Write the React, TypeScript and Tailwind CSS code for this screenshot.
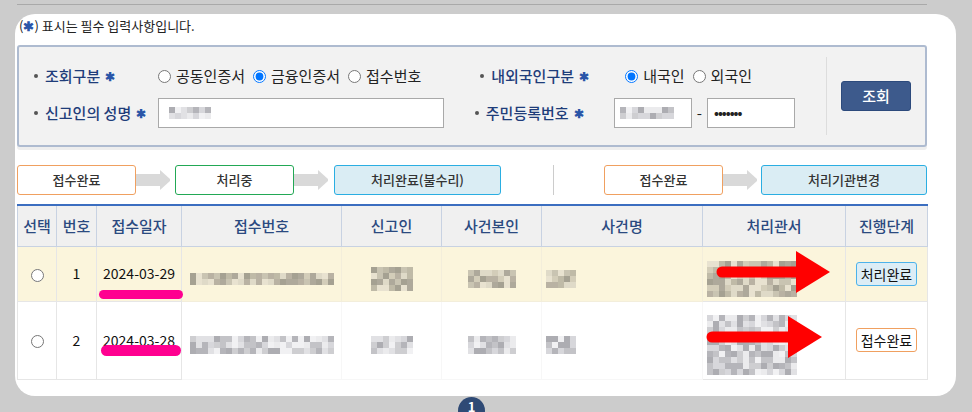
import React from "react";

const FONT = { fontFamily: '"Noto Sans CJK KR", "Noto Sans", sans-serif' };

// blurred (mosaic) placeholder for masked personal data
function Mosaic({ cols, rows, seed, warm }: { cols: number; rows: number; seed: number; warm?: boolean }) {
	const warmTones = ["#b9b4a2", "#a6a194", "#cfc9b6", "#9c988a", "#c4bfae", "#ddd8c6", "#b2ab9d", "#e6e1cf"];
	const coolTones = ["#c9c9cd", "#aeaeb3", "#dedee2", "#bdbdc2", "#e9e9ec", "#a5a5aa", "#d3d3d8", "#f0f0f2"];
	const tones = warm ? warmTones : coolTones;
	let s = seed;
	const next = () => {
		s = (s * 9301 + 49297) % 233280;
		return s / 233280;
	};
	const cells = [];
	for (let i = 0; i < cols * rows; i++) {
		cells.push(
			<span
				key={i}
				className="block h-[6px] w-[6px]"
				style={{ backgroundColor: tones[Math.floor(next() * tones.length)] }}
			/>
		);
	}
	return (
		<div className="inline-flex flex-wrap opacity-90" style={{ width: cols * 6 }}>
			{cells}
		</div>
	);
}

function StepArrow() {
	return (
		<svg width="34" height="30" viewBox="0 0 34 30" className="shrink-0">
			<rect x="0" y="9" width="25" height="12" fill="#d9d9d9" />
			<polygon points="24,5 35,15 24,25" fill="#d9d9d9" />
		</svg>
	);
}

function Step({ label, className }: { label: string; className: string }) {
	return (
		<div
			className={`flex h-[30px] items-center justify-center rounded-[3px] border text-[13px] font-medium text-[#333] ${className}`}
		>
			{label}
		</div>
	);
}

function RedArrow({ shaftStart, tipX }: { shaftStart: number; tipX: number }) {
	const headX = tipX - 34;
	return (
		<svg width="140" height="46" viewBox="0 0 140 46">
			<line x1={shaftStart} y1="23" x2={headX + 4} y2="23" stroke="#ff0000" strokeWidth="11" strokeLinecap="round" />
			<polygon points={`${headX},2 ${tipX},23 ${headX},44`} fill="#ff0000" />
		</svg>
	);
}

function Label({ text, width }: { text: string; width: string }) {
	return (
		<div className={`flex items-center text-[#1f3d7a] ${width}`}>
			<span className="mr-[7px] h-[4px] w-[4px] rounded-full bg-[#555]" />
			<span className="font-medium">{text}</span>
			<span className="ml-[5px] text-[12px] font-bold text-[#2a55a8]">✱</span>
		</div>
	);
}

export default function App() {
	return (
		<div className="h-[412px] w-[972px] overflow-hidden bg-[#cccccc] pt-[4px]" style={FONT}>
			<div className="ml-[17px] h-px w-[910px] bg-[#a9a9a9]" />

			<div className="ml-[15px] mt-[9px] h-[382px] w-[941px] rounded-[20px] bg-white px-[2px] pt-[3px]">
				<p className="ml-[2px] text-[13px] leading-[18px] text-[#222]">
					(<span className="font-bold text-[#2a55a8]">✱</span>) 표시는 필수 입력사항입니다.
				</p>

				{/* search box */}
				<div className="mt-[10px] flex h-[102px] w-[910px] rounded-[3px] border-2 border-[#aebbd0] bg-[#f2f2f2] shadow-[0_3px_0_#eeeeee]">
					<div className="flex flex-1 flex-col gap-[7px] pl-[15px] pt-[14px] text-[15px]">
						<div className="flex h-[30px] items-center">
							<Label text="조회구분" width="w-[124px]" />
							<label className="flex items-center text-[#222]">
								<input type="radio" name="kind" className="m-0 mr-[5px] h-[13px] w-[13px]" />
								공동인증서
							</label>
							<label className="ml-[8px] flex items-center text-[#222]">
								<input type="radio" name="kind" defaultChecked className="m-0 mr-[5px] h-[13px] w-[13px]" />
								금융인증서
							</label>
							<label className="ml-[8px] flex items-center text-[#222]">
								<input type="radio" name="kind" className="m-0 mr-[5px] h-[13px] w-[13px]" />
								접수번호
							</label>

							<div className="ml-auto" />
							<Label text="내외국인구분" width="w-[139px]" />
							<label className="ml-[6px] flex items-center text-[#222]">
								<input type="radio" name="nation" defaultChecked className="m-0 mr-[5px] h-[13px] w-[13px]" />
								내국인
							</label>
							<label className="ml-[8px] mr-[74px] flex items-center text-[#222]">
								<input type="radio" name="nation" className="m-0 mr-[5px] h-[13px] w-[13px]" />
								외국인
							</label>
						</div>

						<div className="flex h-[30px] items-center">
							<Label text="신고인의 성명" width="w-[124px]" />
							<div className="flex h-[30px] w-[286px] items-center border border-[#a9a9a9] bg-white pl-[10px]">
								<Mosaic cols={7} rows={2} seed={11} />
							</div>

							<div className="ml-auto" />
							<Label text="주민등록번호" width="w-[139px]" />
							<div className="flex h-[30px] w-[78px] items-center border border-[#a9a9a9] bg-white pl-[5px]">
								<Mosaic cols={9} rows={2} seed={23} />
							</div>
							<span className="mx-[5px] text-[#222]">-</span>
							<div className="mr-[31px] flex h-[30px] w-[88px] items-center border border-[#a9a9a9] bg-white pl-[6px] text-[13px] font-bold tracking-[-1px] text-[#222]">
								•••••••
							</div>
						</div>
					</div>

					<div className="my-[10px] w-px bg-[#dddddd]" />
					<div className="flex w-[98px] items-center justify-center">
						<button className="h-[30px] w-[70px] rounded-[3px] border border-[#2c4a7c] bg-[#3d5a8c] text-[15px] font-medium text-white">
							조회
						</button>
					</div>
				</div>

				{/* process steps */}
				<div className="mt-[18px] flex w-[910px] items-center">
					<Step label="접수완료" className="w-[119px] border-[#f0a060] bg-white" />
					<StepArrow />
					<div className="w-[5px]" />
					<Step label="처리중" className="w-[119px] border-[#22a855] bg-white" />
					<StepArrow />
					<div className="w-[6px]" />
					<Step label="처리완료(불수리)" className="w-[167px] border-[#2aaee2] bg-[#daedf4]" />
					<div className="ml-[52px] h-[30px] w-px bg-[#cccccc]" />
					<div className="w-[50px]" />
					<Step label="접수완료" className="w-[119px] border-[#f0a060] bg-white" />
					<StepArrow />
					<div className="w-[4px]" />
					<Step label="처리기관변경" className="flex-1 border-[#2aaee2] bg-[#daedf4]" />
				</div>

				{/* result table */}
				<div className="relative mt-[9px]">
					<table className="w-[910px] table-fixed border-collapse text-center">
						<colgroup>
							<col className="w-[39px]" />
							<col className="w-[40px]" />
							<col className="w-[85px]" />
							<col className="w-[160px]" />
							<col className="w-[100px]" />
							<col className="w-[100px]" />
							<col className="w-[161px]" />
							<col className="w-[143px]" />
							<col className="w-[82px]" />
						</colgroup>
						<thead>
							<tr className="h-[41px] border-t-2 border-[#3b6ec0] bg-[#f0f0f0] text-[15px] font-medium text-[#2b4a80]">
								{["선택", "번호", "접수일자", "접수번호", "신고인", "사건본인", "사건명", "처리관서", "진행단계"].map((h) => (
									<th key={h} className="border-x border-b border-[#c8d2e2] font-medium">
										{h}
									</th>
								))}
							</tr>
						</thead>
						<tbody className="text-[14px] text-[#111]">
							<tr className="h-[55px] bg-[#fbf5dc]">
								<td className="border border-[#e6e6e6]">
									<input type="radio" name="row" className="m-0 h-[13px] w-[13px] align-middle" />
								</td>
								<td className="border border-[#e6e6e6]">1</td>
								<td className="relative border border-[#e6e6e6]">
									2024-03-29
									<span className="absolute bottom-[2px] left-[2px] h-[9px] w-[84px] rounded-full bg-[#ff0090]" />
								</td>
								<td className="border border-[#f3eedb]">
									<Mosaic cols={24} rows={2} seed={5} warm />
								</td>
								<td className="border border-[#f3eedb]">
									<Mosaic cols={7} rows={4} seed={7} warm />
								</td>
								<td className="border border-[#f3eedb]">
									<Mosaic cols={8} rows={3} seed={9} warm />
								</td>
								<td className="border border-[#f3eedb] text-left">
									<span className="ml-[4px] inline-block">
										<Mosaic cols={5} rows={3} seed={13} warm />
									</span>
								</td>
								<td className="border border-[#e6e6e6] text-left">
									<span className="ml-[4px] inline-block">
										<Mosaic cols={15} rows={6} seed={17} warm />
									</span>
								</td>
								<td className="border border-[#e6e6e6]">
									<span className="inline-block rounded-[3px] border border-[#4cb2ea] bg-[#dcedf6] px-[4px] leading-[22px]">
										처리완료
									</span>
								</td>
							</tr>
							<tr className="h-[78px] bg-white">
								<td className="border border-[#e6e6e6]">
									<input type="radio" name="row" className="m-0 h-[13px] w-[13px] align-middle" />
								</td>
								<td className="border border-[#e6e6e6]">2</td>
								<td className="relative border border-[#e6e6e6]">
									2024-03-28
									<span className="absolute bottom-[23px] left-[4px] h-[11px] w-[80px] rounded-full bg-[#ff0090]" />
								</td>
								<td className="border border-[#f7f7f7]">
									<Mosaic cols={24} rows={3} seed={21} />
								</td>
								<td className="border border-[#f7f7f7]">
									<Mosaic cols={7} rows={3} seed={27} />
								</td>
								<td className="border border-[#f7f7f7]">
									<Mosaic cols={8} rows={3} seed={31} />
								</td>
								<td className="border border-[#f7f7f7] text-left">
									<span className="ml-[4px] inline-block">
										<Mosaic cols={5} rows={3} seed={37} />
									</span>
								</td>
								<td className="border border-[#e6e6e6] text-left">
									<span className="ml-[4px] inline-block">
										<Mosaic cols={15} rows={10} seed={41} />
									</span>
								</td>
								<td className="border border-[#e6e6e6]">
									<span className="inline-block rounded-[3px] border border-[#f0a060] bg-white px-[4px] leading-[22px]">
										접수완료
									</span>
								</td>
							</tr>
						</tbody>
					</table>

					{/* annotation arrows */}
					<div className="absolute left-[693px] top-[45px]">
						<RedArrow shaftStart={12} tipX={120} />
					</div>
					<div className="absolute left-[683px] top-[110px]">
						<RedArrow shaftStart={12} tipX={122} />
					</div>
				</div>
			</div>

			{/* pagination */}
			<div className="ml-[458px] mt-px flex h-[27px] w-[27px] items-start justify-center rounded-full bg-[#2f4a75] pt-[3px] text-[13px] font-bold leading-none text-white">
				1
			</div>
		</div>
	);
}
